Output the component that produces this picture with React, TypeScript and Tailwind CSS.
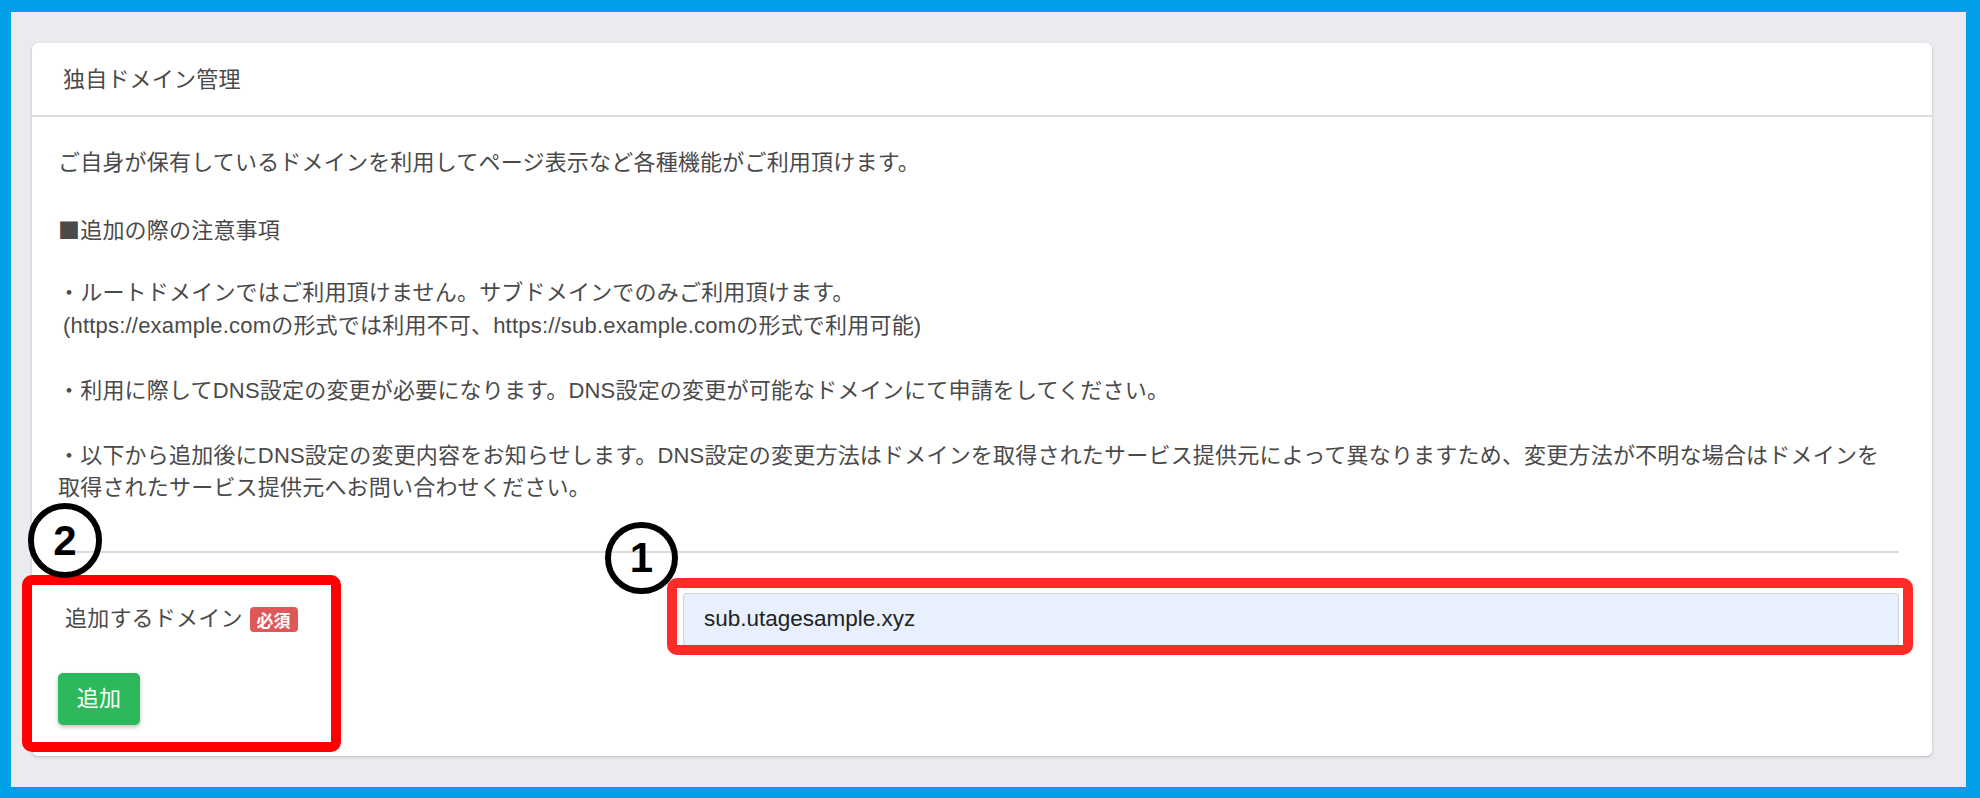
export default function App() {
  const jp = { fontFamily: '"Liberation Sans", "Noto Sans CJK JP", sans-serif' };
  const cjk = { fontFamily: '"Noto Sans CJK JP", sans-serif' };
  const latin = { fontFamily: '"Liberation Sans", Arial, sans-serif' };

  return (
    <div className="relative w-[1980px] h-[798px] bg-[#00a0e9] pt-[12px] pl-[11px] pr-[14px] pb-[11px]" style={jp}>
      <div className="h-full bg-[#e9ebee] pt-[31px] pl-[21px] pr-[34px]">
        <div className="bg-white rounded-[6px] shadow-[0_1px_3px_rgba(0,0,0,0.22)]">
          <div className="h-[74px] flex items-center pl-[31px] border-b-2 border-[#dcdce1] text-[22px] tracking-[0.2px] text-[#4a4a4a]">
            独自ドメイン管理
          </div>

          <div className="pt-[30px] pl-[26px] pr-[33px] pb-[31px] text-[22px] tracking-[0.2px] leading-[32.5px] text-[#4a4a4a] whitespace-nowrap">
            <div className="h-[32.5px] mb-[32.5px]">ご自身が保有しているドメインを利用してページ表示など各種機能がご利用頂けます。</div>
            <div className="h-[32.5px] mb-[32.5px]">
              <span style={cjk}>■</span>追加の際の注意事項
            </div>
            <div className="h-[32.5px]">・ルートドメインではご利用頂けません。サブドメインでのみご利用頂けます。</div>
            <div className="h-[32.5px] mb-[32.5px] pl-[5px]">(https://example.comの形式では利用不可、https://sub.example.comの形式で利用可能)</div>
            <div className="h-[32.5px] mb-[32.5px]">・利用に際してDNS設定の変更が必要になります。DNS設定の変更が可能なドメインにて申請をしてください。</div>
            <div className="h-[32.5px]">
              ・以下から追加後にDNS設定の変更内容をお知らせします。DNS設定の変更方法はドメインを取得されたサービス提供元によって異なりますため、変更方法が不明な場合はドメインを
            </div>
            <div className="h-[32.5px]">取得されたサービス提供元へお問い合わせください。</div>

            <div className="mt-[46px] h-[2px] bg-[#d9d9dc]" />

            <div className="mt-[40px] h-[53px] flex items-center">
              <div className="w-[625px] pl-[7px] flex items-center gap-[7px]">
                <span>追加するドメイン</span>
                <span className="w-[48px] h-[25px] rounded-[4px] bg-[#df5858] text-white text-[17px] font-bold leading-[25px] text-center tracking-normal" style={cjk}>
                  必須
                </span>
              </div>
              <div className="flex-1 h-[53px] bg-[#e8f0fe] border border-[#cfd4da] rounded-[3px] flex items-center pl-[20px] text-[22.5px] tracking-normal text-[#222]" style={latin}>
                sub.utagesample.xyz
              </div>
            </div>

            <button className="block mt-[27px] w-[82px] h-[52px] rounded-[5px] bg-[#2eb85c] text-white text-[22px] leading-none shadow-[0_2px_4px_rgba(0,0,0,0.25)]">
              追加
            </button>
          </div>
        </div>
      </div>

      {/* annotations */}
      <div className="absolute left-[22px] top-[575px] w-[319px] h-[177px] border-[10px] border-[#ff0000] rounded-[10px]" />
      <div className="absolute left-[667px] top-[578px] w-[1246px] h-[77px] border-[10px] border-[#ff2b26] rounded-[10px]" />
      <div className="absolute left-[28px] top-[503px] w-[74px] h-[75px] rounded-full border-[6px] border-black flex items-center justify-center text-[42px] font-bold text-black leading-none" style={latin}>
        2
      </div>
      <div className="absolute left-[605px] top-[522px] w-[73px] h-[72px] rounded-full border-[6px] border-black flex items-center justify-center text-[42px] font-bold text-black leading-none" style={latin}>
        1
      </div>
    </div>
  );
}
